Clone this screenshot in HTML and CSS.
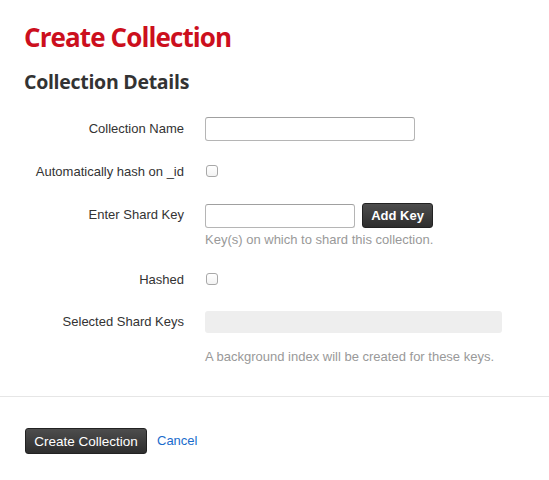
FILE: index.html
```html
<!DOCTYPE html>
<html>
<head>
<meta charset="utf-8">
<link rel="stylesheet" href="styles.css">
</head>
<body>
<div class="page">
  <h1 class="title">Create Collection</h1>
  <h2 class="subtitle">Collection Details</h2>
  <form class="form">
    <div class="row">
      <label class="label">Collection Name</label>
      <div class="field"><input type="text" class="input input-wide"></div>
    </div>
    <div class="row row-check">
      <label class="label">Automatically hash on _id</label>
      <div class="field"><span class="checkbox"></span></div>
    </div>
    <div class="row row-top">
      <label class="label label-tall">Enter Shard Key</label>
      <div class="field">
        <div class="inline">
          <input type="text" class="input input-short">
          <button type="button" class="btn btn-small">Add Key</button>
        </div>
        <div class="help">Key(s) on which to shard this collection.</div>
      </div>
    </div>
    <div class="row row-check">
      <label class="label">Hashed</label>
      <div class="field"><span class="checkbox"></span></div>
    </div>
    <div class="row row-top row-last">
      <label class="label label-keys">Selected Shard Keys</label>
      <div class="field">
        <div class="keys"></div>
        <div class="help help-keys">A background index will be created for these keys.</div>
      </div>
    </div>
  </form>
</div>
<div class="footer">
  <button type="button" class="btn btn-main">Create Collection</button>
  <a class="cancel" href="#">Cancel</a>
</div>
</body>
</html>
```
FILE: styles.css
```css
html, body {
  margin: 0;
  padding: 0;
  background: #fff;
}
body {
  font-family: "Liberation Sans", Arial, sans-serif;
  font-size: 13px;
  color: #333;
}
.page {
  padding: 19px 24px 0 24px;
}
.title {
  font-family: "Open Sans", "Noto Sans", sans-serif;
  font-weight: 700;
  font-size: 26px;
  letter-spacing: -0.9px;
  line-height: 36px;
  color: #cc0f1d;
  margin: 0;
}
.subtitle {
  font-family: "Open Sans", "Noto Sans", sans-serif;
  font-weight: 700;
  font-size: 19.5px;
  letter-spacing: -0.28px;
  line-height: 28px;
  color: #333;
  margin: 13px 0 0 0;
}
.form {
  margin-top: 21px;
}
.row {
  display: grid;
  grid-template-columns: 160px 1fr;
  column-gap: 21px;
  align-items: center;
  margin-bottom: 21px;
}
.row-last {
  margin-bottom: 0;
}
.row-top {
  align-items: start;
}
.label {
  text-align: right;
  line-height: 18px;
}
.label-tall {
  line-height: 24px;
}
.label-keys {
  line-height: 22px;
}
.input {
  box-sizing: border-box;
  height: 24px;
  border: 1px solid #b5b5b5;
  border-top-color: #a0a0a0;
  border-radius: 3px;
  padding: 0 6px;
  margin: 0;
  font: inherit;
  background: #fff;
  display: block;
}
.input-wide {
  width: 210px;
}
.input-short {
  width: 150px;
}
.row-check {
  height: 20px;
}
.checkbox {
  display: block;
  box-sizing: border-box;
  width: 12px;
  height: 12px;
  margin-left: 1px;
  margin-top: -2px;
  border: 1px solid #a8a8a8;
  border-radius: 3px;
  background: linear-gradient(#fff, #f3f3f3);
}
.inline {
  display: flex;
  align-items: center;
  gap: 7px;
}
.btn {
  box-sizing: border-box;
  border: 1px solid #222;
  border-radius: 3px;
  background: linear-gradient(#4d4d4d, #2e2e2e);
  color: #fff;
  font-family: "Liberation Sans", Arial, sans-serif;
  margin: 0;
  padding: 0;
  cursor: pointer;
}
.btn-small {
  width: 71px;
  height: 25px;
  font-weight: 700;
  font-size: 13px;
}
.help {
  color: #999;
  line-height: 18px;
  margin-top: 3px;
}
.keys {
  width: 297px;
  height: 22px;
  background: #eeeeee;
  border-radius: 3px;
}
.help-keys {
  margin-top: 15px;
}
.footer {
  margin-top: 30px;
  border-top: 1px solid #e6e6e6;
  padding: 31px 25px 0 25px;
  display: flex;
  align-items: center;
  gap: 10px;
}
.btn-main {
  width: 122px;
  height: 26px;
  font-size: 13.5px;
}
.cancel {
  color: #1a6ccc;
  text-decoration: none;
  font-size: 13px;
  margin-top: -2px;
}
```
